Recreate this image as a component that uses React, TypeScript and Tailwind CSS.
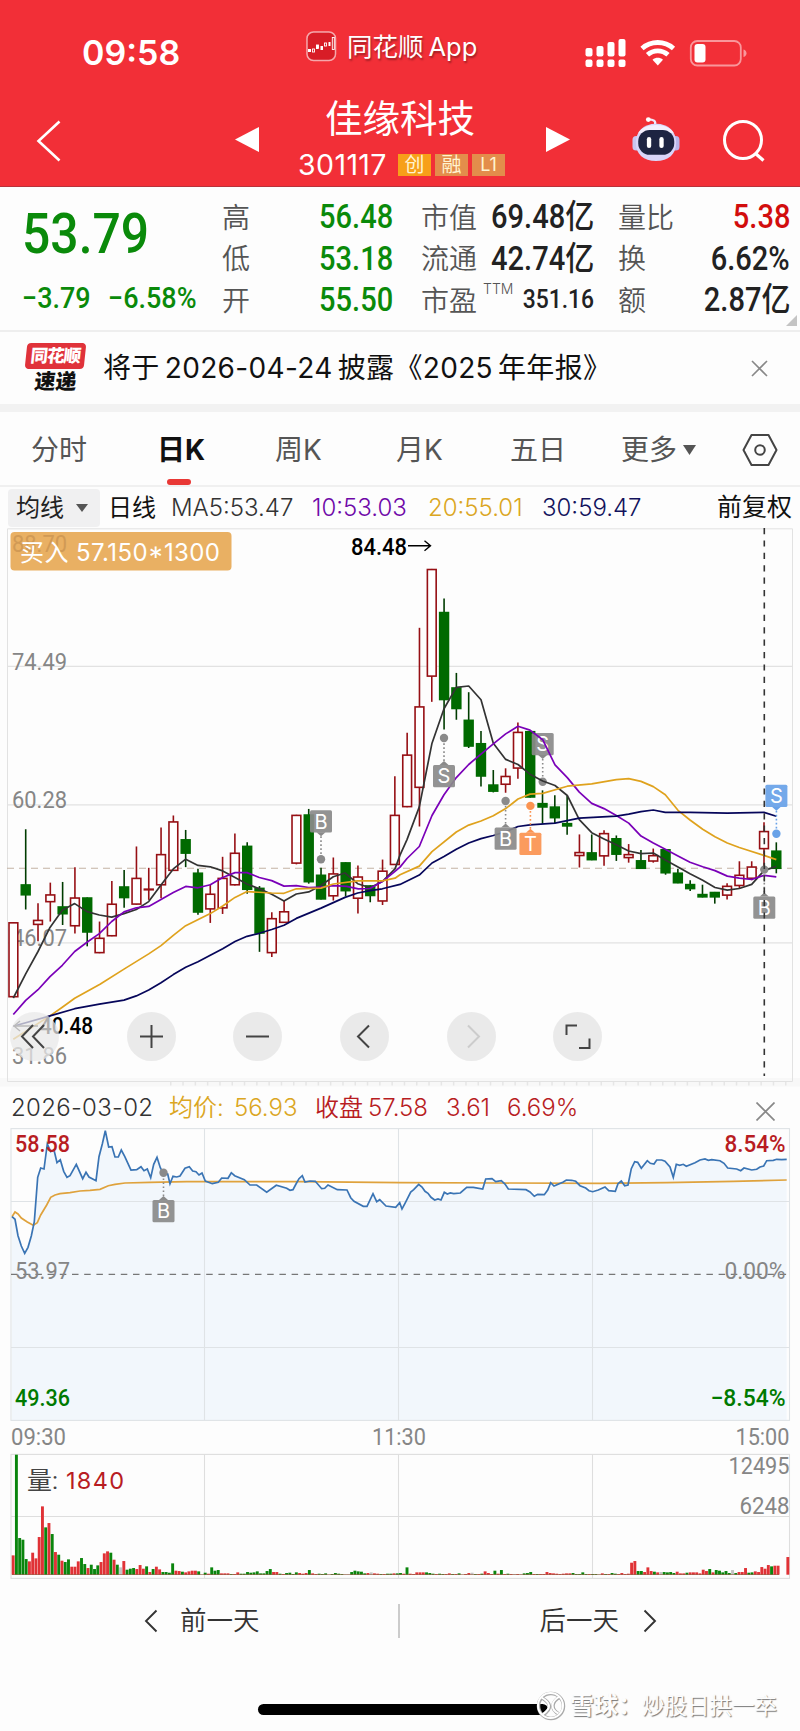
import type { ReactNode } from 'react';
import clsx from 'clsx';

const DIN = 'Roboto, "Noto Sans CJK SC", sans-serif';

// Chart points are stored in device units, these bring them to CSS pixels.
const CANDLE_TOP = 540;
const CANDLE_SCALE = 2.904;
const MINUTE_TOP = 1070;
const MINUTE_SCALE = 3;

const line = (pts: string, top: number, scale: number) =>
  pts
    .trim()
    .split(/\s+/)
    .map((p) => {
      const [x, y] = p.split(',').map(Number);
      return `${(x / 3).toFixed(1)},${(top + y / scale).toFixed(1)}`;
    })
    .join(' ');

// direction, high, body top, body bottom, low
type Candle = [string, number, number, number, number];

const CANDLES: Candle[] = [
  ['r', 1110, 1110, 1328, 1328],
  ['g', 840, 1000, 1032, 1073],
  ['r', 1055, 1103, 1118, 1165],
  ['r', 995, 1029, 1052, 1108],
  ['g', 993, 1064, 1087, 1118],
  ['r', 950, 1038, 1122, 1143],
  ['g', 1038, 1038, 1140, 1180],
  ['r', 1108, 1155, 1200, 1200],
  ['r', 990, 1056, 1151, 1151],
  ['g', 958, 1006, 1040, 1068],
  ['r', 890, 981, 1059, 1059],
  ['r', 952, 1014, 1016, 1045],
  ['r', 835, 912, 1003, 1040],
  ['r', 800, 817, 961, 961],
  ['g', 842, 869, 911, 950],
  ['g', 955, 966, 1082, 1088],
  ['r', 1000, 1027, 1073, 1112],
  ['r', 920, 981, 1070, 1086],
  ['r', 852, 908, 1003, 1003],
  ['g', 878, 888, 1016, 1027],
  ['g', 1005, 1010, 1143, 1196],
  ['r', 1081, 1098, 1200, 1211],
  ['r', 1048, 1078, 1112, 1112],
  ['r', 798, 798, 940, 942],
  ['g', 781, 797, 994, 998],
  ['g', 952, 972, 1044, 1044],
  ['r', 922, 968, 1035, 1047],
  ['g', 936, 936, 1020, 1035],
  ['r', 945, 977, 1042, 1085],
  ['g', 1003, 1003, 1034, 1052],
  ['r', 928, 960, 1050, 1060],
  ['r', 686, 798, 944, 944],
  ['r', 560, 623, 776, 776],
  ['r', 255, 483, 720, 832],
  ['r', 84, 84, 397, 470],
  ['g', 170, 209, 465, 550],
  ['g', 386, 428, 491, 522],
  ['g', 442, 522, 600, 604],
  ['g', 555, 590, 687, 716],
  ['g', 668, 710, 731, 733],
  ['r', 663, 685, 711, 734],
  ['r', 530, 557, 664, 693],
  ['g', 555, 555, 748, 748],
  ['g', 727, 764, 777, 824],
  ['g', 741, 774, 808, 822],
  ['g', 743, 822, 832, 856],
  ['r', 855, 906, 918, 951],
  ['g', 855, 907, 930, 930],
  ['r', 843, 851, 919, 946],
  ['g', 858, 866, 914, 932],
  ['r', 883, 912, 924, 937],
  ['g', 900, 930, 955, 955],
  ['r', 896, 915, 934, 937],
  ['g', 898, 898, 968, 972],
  ['g', 955, 966, 997, 997],
  ['g', 988, 999, 1014, 1019],
  ['g', 1001, 1028, 1038, 1038],
  ['g', 1022, 1022, 1038, 1056],
  ['r', 997, 1004, 1033, 1044],
  ['r', 933, 972, 1005, 1012],
  ['r', 933, 948, 984, 988],
  ['r', 820, 845, 898, 955],
  ['g', 878, 902, 955, 968],
];

const MA5 = `40,1330 77,1260 114,1195 150,1125 187,1075 224,1056 261,1079 298,1089 335,1095 372,1085 409,1073 446,1050 483,1002
  520,955 557,927 594,945 631,949 668,961 705,980 741,999 778,1013 815,1029 852,1048 889,1028 926,1022 963,1003 1000,978
  1035,967 1073,998 1110,1010 1147,992 1185,955 1200,915 1221,870 1258,775 1296,590 1332,490 1369,428 1406,424 1443,464
  1480,590 1517,637 1554,652 1590,680 1628,700 1665,713 1702,742 1738,812 1775,850 1812,868 1849,885 1886,903 1923,911
  1960,909 1996,929 2034,950 2070,969 2108,988 2145,1009 2182,1017 2218,1012 2255,1000 2292,960 2329,948`;

const MA10 = `40,1378 77,1337 114,1306 150,1268 187,1235 224,1195 261,1168 298,1143 335,1108 372,1080 409,1068 446,1064 483,1044
  520,1024 557,1006 594,1010 631,1001 668,980 705,966 741,966 778,980 815,989 852,1005 889,1004 926,1009 963,1008 1000,1004
  1040,1006 1075,1013 1110,1012 1147,992 1185,962 1200,950 1221,925 1258,890 1296,800 1332,740 1369,690 1406,652 1443,622
  1480,592 1517,563 1554,541 1590,552 1628,580 1665,653 1702,690 1738,732 1775,765 1812,780 1849,800 1886,822 1923,860
  1960,880 1996,898 2034,918 2070,936 2108,949 2145,960 2182,976 2218,982 2255,986 2292,974 2329,978`;

const MA20 = `40,1450 150,1382 187,1357 224,1331 300,1290 372,1246 446,1202 483,1178 520,1148 557,1120 631,1085 668,1063 705,1038
  741,1021 815,1025 852,1026 889,1013 963,1011 1000,999 1073,990 1147,990 1185,982 1200,972 1258,947 1296,905 1369,848
  1406,828 1443,816 1480,801 1517,780 1554,752 1590,738 1628,736 1702,715 1775,708 1849,696 1886,693 1923,701 1960,716
  1996,740 2034,785 2070,813 2108,840 2145,862 2182,880 2218,893 2292,916 2329,928`;

const MA30 = `40,1412 150,1382 224,1361 298,1348 372,1336 409,1324 446,1307 483,1286 520,1262 557,1241 594,1225 631,1206 668,1187
  705,1166 741,1151 778,1142 815,1131 852,1119 889,1099 963,1069 1035,1038 1073,1025 1110,1018 1147,1013 1200,1000 1258,973
  1296,938 1332,919 1369,898 1406,880 1443,867 1480,858 1517,847 1554,832 1590,827 1665,822 1738,808 1849,802 1886,796
  1923,789 1960,784 1996,791 2070,791 2182,793 2292,791 2329,802`;

const PRICE = `36,440 45,448 54,497 64,528 74,550 84,532 94,498 103,455 113,322 122,294 132,297 142,222 152,245 162,240 171,278
  181,269 191,304 201,322 210,317 229,283 248,326 258,307 267,321 288,332 297,260 307,222 316,182 326,231 336,230 345,261
  355,261 364,240 374,259 393,300 410,299 423,290 432,302 442,297 452,323 461,283 471,262 481,293 490,310 503,312 510,341
  519,319 530,321 540,318 555,295 568,290 578,303 588,305 597,315 606,309 616,333 637,341 655,337 665,324 684,325 694,308
  704,317 733,329 750,345 770,345 800,367 829,346 860,355 870,361 879,359 888,342 897,326 907,317 915,336 930,333 946,334
  965,356 974,355 984,345 1012,359 1041,360 1052,383 1062,394 1090,409 1101,409 1119,371 1130,395 1139,389 1158,408
  1187,412 1199,398 1206,417 1215,400 1232,366 1241,359 1256,343 1266,351 1275,364 1284,370 1293,382 1304,390 1314,387
  1323,390 1333,367 1342,372 1351,369 1361,371 1381,369 1400,352 1420,352 1448,357 1457,327 1476,326 1487,335 1504,332
  1515,342 1525,357 1578,359 1590,366 1603,379 1613,373 1633,374 1643,360 1652,338 1662,348 1690,336 1699,330 1715,331
  1727,334 1740,347 1757,354 1767,362 1778,365 1795,360 1815,351 1826,362 1846,364 1854,341 1864,333 1874,347 1884,345
  1894,296 1904,275 1913,277 1924,295 1942,272 1951,280 1962,282 1970,270 1985,270 1995,274 2010,291 2020,322 2029,283
  2039,286 2050,283 2059,289 2085,278 2100,270 2115,267 2125,271 2135,269 2160,272 2172,280 2183,294 2210,297 2222,302
  2232,294 2255,300 2270,298 2280,291 2291,288 2300,272 2320,271 2330,268 2345,269 2360,268`;

const AVERAGE = `36,440 45,426 54,432 64,444 82,456 100,466 112,458 122,435 140,405 152,382 165,375 180,371 210,368 240,363 270,361
  300,358 325,347 345,343 375,339 450,337 560,335 900,335 1200,338 1500,339 1800,340 2000,338 2200,334 2360,330`;

// one entry per minute: colour + bar height
const VOLUME = `r58 g360 g110 g105 g47 r40 r66 r49 r113 r205 g142 r155 g122 r68 g60 r42 g38 g46 r24 r24 r40 g50 g32 r20 g30 g17 g28
  r38 r64 r70 g66 r45 g30 n22 r41 g15 g18 g20 r17 r29 r18 g25 r8 g17 r24 r16 g8 g8 g6 g34 r12 r11 g9 r7 r10 r12 r12 g10 n0 g6
  r3 g22 g12 g14 r4 r4 r4 g2 r2 r7 g3 g3 g8 g6 g7 g10 g4 g4 g11 g17 r8 r8 g3 r2 g5 g6 g2 g7 r5 r3 r5 g14 r4 r2 g3 g2 g4 n0
  g2 g5 g3 g2 n1 n1 g8 g12 g10 g9 g4 r5 n7 r4 r3 g2 r2 g3 g3 r4 g4 g5 r3 g22 r3 r2 r7 r7 r7 g7 g5 g3 r2 g3 g2 r2 r4 g2 r2 g4
  n0 r2 r5 n6 g2 r2 g3 r10 r5 r2 g12 r3 g14 r2 g3 r2 n2 r2 n1 g4 g5 g8 r2 g2 r2 r2 r8 r5 r4 r3 r2 r3 r4 r4 g5 g2 g2 g7 g2 r2
  g2 g2 n1 r4 g2 r2 g5 g3 r2 r5 r2 r3 r36 r41 g11 g11 r8 r22 r11 g9 r7 n8 g8 g7 g8 g5 r9 r4 r4 g6 r7 r7 r7 r4 r15 r11 g17 r7
  g14 g12 g7 g11 g5 n14 g5 r8 r8 r20 g6 g7 r10 r8 r23 r18 r29 g25 r27 r27 n0 n0 r53`
  .trim()
  .split(/\s+/);

type LabelProps = {
  x: number;
  y: number;
  w: number;
  end?: boolean;
  size?: number;
  weight?: number;
  fill?: string;
  children: string;
};

function Label({
  x,
  y,
  w,
  end,
  size = 23.5,
  weight = 400,
  fill = '#868686',
  children,
}: LabelProps) {
  return (
    <text
      x={end ? x - w : x}
      y={y}
      textLength={w}
      lengthAdjust="spacingAndGlyphs"
      fontFamily={DIN}
      fontSize={size}
      fontWeight={weight}
      fill={fill}
    >
      {children}
    </text>
  );
}

type MarkerProps = {
  x: number;
  dot: number;
  badge: number;
  letter: string;
  color?: string;
};

// Trade marker: a lettered badge tied to its price by a dotted stem
function Marker({ x, dot, badge, letter, color = '#8a8a8a' }: MarkerProps) {
  const above = badge < dot;
  const edge = above ? badge + 22 : badge;
  const tip = above ? edge + 4 : edge - 4;
  return (
    <g fill={color}>
      <rect x={x - 11} y={badge} width="22" height="22.3" rx="1.5" opacity=".92" />
      <path d={`M${x - 4.5} ${edge}L${x} ${tip}L${x + 4.5} ${edge}z`} />
      <path
        d={`M${x} ${tip}V${dot}`}
        stroke={color}
        strokeWidth="1.6"
        strokeDasharray="1.6 2.4"
      />
      <circle cx={x} cy={dot} r="4.2" />
      <text
        x={x}
        y={badge + 18.3}
        fontSize="20"
        fill="#fff"
        textAnchor="middle"
        fontFamily="Inter, sans-serif"
      >
        {letter}
      </text>
    </g>
  );
}

function CandleChart() {
  const y = (v: number) => CANDLE_TOP + v / CANDLE_SCALE;
  return (
    <svg className="block h-[559px] w-full" viewBox="0 528 800 559">
      <rect x="0" y="1078" width="800" height="8.5" fill="#f8f8f8" />
      <path
        d="M170 1083.5H790"
        stroke="#e6e6e6"
        strokeWidth="4"
        strokeDasharray="1.5 10.8"
      />
      <g stroke="#e2e2e2" fill="none">
        <path d="M7.5 1081.5V528.8H792.5V1081.5z" />
        <path d="M7 666.4H793M7 804.8H793M7 942.9H793" strokeWidth="1.2" />
      </g>
      <Label x={12} y={670} w={55}>74.49</Label>
      <Label x={12} y={808.3} w={55}>60.28</Label>
      <Label x={12} y={946.2} w={55}>46.07</Label>
      <Label x={12} y={1064} w={55}>31.86</Label>
      <path
        d="M7 868.2H792"
        stroke="#c3b3a4"
        strokeWidth="1.1"
        strokeDasharray="7 5"
      />
      {CANDLES.map(([dir, high, top, bottom, low], i) => {
        const x = 13.4 + 12.305 * i;
        const up = dir === 'r';
        const flat = bottom - top < 4;
        return (
          <g key={i} stroke={up ? '#960f14' : '#003c00'} strokeWidth="1.6">
            <path d={`M${x} ${y(high)}V${y(low)}`} />
            <rect
              x={x - 4.4}
              y={y(top) + (flat ? 0 : 0.6)}
              width="8.8"
              height={flat ? 0.6 : Math.max(y(bottom) - y(top) - 1.2, 1)}
              fill={up ? '#fff' : '#006a00'}
              stroke={up ? '#960f14' : '#006a00'}
              strokeWidth="1.6"
            />
          </g>
        );
      })}
      <Marker x={321} dot={859.2} badge={810.3} letter="B" />
      <Marker x={542.7} dot={781.7} badge={732.9} letter="S" />
      <g fill="none" strokeWidth="1.7" strokeLinejoin="round">
        <polyline points={line(MA5, CANDLE_TOP, CANDLE_SCALE)} stroke="#333" />
        <polyline points={line(MA10, CANDLE_TOP, CANDLE_SCALE)} stroke="#7a00b8" />
        <polyline points={line(MA20, CANDLE_TOP, CANDLE_SCALE)} stroke="#dfa21d" />
        <polyline points={line(MA30, CANDLE_TOP, CANDLE_SCALE)} stroke="#06065a" />
      </g>
      <Marker x={444} dot={738} badge={764.9} letter="S" />
      <Marker x={505.6} dot={801} badge={827.5} letter="B" />
      <Marker x={530.4} dot={805.9} badge={832.7} letter="T" color="#fb9350" />
      <Marker x={764.3} dot={869.6} badge={896.4} letter="B" />
      <Marker x={776.4} dot={833.7} badge={784.8} letter="S" color="#68a2e8" />
      <path
        d="M764.3 528V1076"
        stroke="#333"
        strokeWidth="1.6"
        strokeDasharray="6.2 6.2"
      />
      <Label x={351} y={554.5} w={56} weight={500} fill="#000">84.48</Label>
      <path
        d="M408 545.7H430M424.5 540.7L430.5 545.7L424.5 550.7"
        stroke="#000"
        strokeWidth="1.4"
        fill="none"
      />
      <Label x={40} y={1034} w={53} weight={500} fill="#000">40.48</Label>
      <path
        d="M38 1026H14M20 1021L14 1026L20 1031"
        stroke="#333"
        strokeWidth="1.3"
        fill="none"
      />
      <rect x="10.5" y="532" width="221" height="38.5" rx="4" fill="#e9b063" />
      <Label x={12} y={552} w={55} fill="#d19a55">88.70</Label>
      <text
        x="20"
        y="560.5"
        fontSize="24"
        fill="#fff"
        textLength="200"
        fontFamily='Inter, "Noto Sans CJK SC", sans-serif'
      >
        买入 57.150*1300
      </text>
    </svg>
  );
}

function MinuteChart() {
  const price = line(PRICE, MINUTE_TOP, MINUTE_SCALE);
  return (
    <svg className="block h-[324px] w-full" viewBox="0 1128 800 324">
      <polygon points={`12,1420 ${price} 786.7,1420`} fill="#f2f7fc" />
      <g stroke="#dfe3e6" strokeWidth="1.1" fill="none">
        <rect x="11" y="1128.6" width="778.5" height="291.8" />
        <path d="M11 1201.5H789.5M11 1347.5H789.5M204.5 1128.5V1420.5M398.5 1128.5V1420.5M592.5 1128.5V1420.5" />
      </g>
      <path
        d="M11 1274.4H789.5"
        stroke="#777"
        strokeWidth="1.1"
        strokeDasharray="6.5 5.7"
      />
      <polyline
        points={line(AVERAGE, MINUTE_TOP, MINUTE_SCALE)}
        fill="none"
        stroke="#dfa23c"
        strokeWidth="1.7"
      />
      <polyline points={price} fill="none" stroke="#3a74b4" strokeWidth="1.7" />
      <Marker x={163.5} dot={1172.7} badge={1200} letter="B" />
      <Label x={15} y={1151.5} w={55} weight={500} fill="#b81c22">58.58</Label>
      <Label x={15} y={1278.7} w={55}>53.97</Label>
      <Label x={15} y={1405.5} w={55} weight={500} fill="#007a00">49.36</Label>
      <Label x={785.5} y={1151.5} w={61} end weight={500} fill="#b81c22">8.54%</Label>
      <Label x={785.5} y={1278.7} w={61} end>0.00%</Label>
      <Label x={785.5} y={1405.5} w={75} end weight={500} fill="#007a00">−8.54%</Label>
      <Label x={11} y={1444.5} w={55}>09:30</Label>
      <Label x={372} y={1444.5} w={54}>11:30</Label>
      <Label x={789.5} y={1444.5} w={54} end>15:00</Label>
    </svg>
  );
}

function VolumeChart() {
  // the last bar closes on the right edge of the grid
  const step = 774.7 / (VOLUME.length - 1);
  return (
    <svg className="block h-[128px] w-full" viewBox="0 1452 800 128">
      <g stroke="#dedede" strokeWidth="1.1" fill="none">
        <rect x="11" y="1454.4" width="778.5" height="124" />
        <path d="M11 1516.5H789.5M204.5 1454V1578M398.5 1454V1578M592.5 1454V1578" />
      </g>
      {VOLUME.map((bar, i) => {
        const h = Number(bar.slice(1)) / 3;
        const tone = { r: '#e03236', g: '#0a850d', n: '#c4c4c4' }[bar[0]];
        return (
          <rect
            key={i}
            x={11.7 + step * i}
            y={1574.7 - h}
            width="2.9"
            height={h}
            fill={tone}
          />
        );
      })}
      <path d="M12 1574.6H779" stroke="#7a3a18" strokeWidth=".8" opacity=".7" />
      <Label x={27} y={1488.5} w={31} size={24} fill="#444">量:</Label>
      <text
        x="66"
        y="1488.5"
        fontSize="23.5"
        fill="#b81c22"
        textLength="58"
        fontFamily="Inter, sans-serif"
      >
        1840
      </text>
      <Label x={789.5} y={1474.3} w={61} end>12495</Label>
      <Label x={789.5} y={1514.3} w={50} end>6248</Label>
    </svg>
  );
}

function StatusBar() {
  return (
    <div className="flex h-[92px] items-start">
      <div className="ml-[82px] mt-[32px] w-[224px] text-[34px] font-semibold leading-[42px]">
        09:58
      </div>
      <svg className="mt-[31px] size-[31px]" viewBox="0 0 31 31">
        <rect
          x="1"
          y="1"
          width="28.5"
          height="28.5"
          rx="6.5"
          fill="#d81d27"
          stroke="#fff"
          strokeOpacity=".6"
          strokeWidth="1.5"
        />
        <g fill="#fff">
          <rect x="2" y="18" width="3" height="3" />
          <rect x="10" y="14" width="2.6" height="4" />
          <rect x="14.5" y="15" width="2.5" height="4" />
          <rect x="22.5" y="11" width="2" height="4" />
        </g>
        <g fill="none" stroke="#fff" strokeWidth=".9">
          <rect x="6.5" y="18" width="2" height="3" />
          <rect x="10.5" y="14" width="2" height="3" />
          <rect x="18.5" y="12" width="2" height="3" />
          <rect x="26.3" y="6.5" width="2" height="12" />
        </g>
      </svg>
      <div className="ml-[10px] mt-[29px] w-[238px] whitespace-nowrap text-[25.5px] leading-[36px] [text-shadow:1px_2px_2px_rgba(0,0,0,.35)]">
        同花顺<span className="ml-[5px]">App</span>
      </div>
      <svg className="mt-[38px] h-[30px] w-[164px]" viewBox="0 0 164 30">
        <g fill="#fff">
          <rect x="0.5" y="10" width="7" height="8.5" rx="2" />
          <rect x="11.5" y="8" width="7" height="10.5" rx="2" />
          <rect x="22.5" y="4" width="7" height="14.5" rx="2" />
          <rect x="33.5" y="1" width="7" height="17.5" rx="2" />
          <rect x="0.5" y="21.5" width="7" height="7.5" rx="2" />
          <rect x="11.5" y="21.5" width="7" height="7.5" rx="2" />
          <rect x="22.5" y="21.5" width="7" height="7.5" rx="2" />
          <rect x="33.5" y="21.5" width="7" height="7.5" rx="2" />
        </g>
        <g fill="none" stroke="#fff" strokeWidth="4.8">
          <path d="M57 10.5C66 2.5 79.5 2.5 88.5 10.5" />
          <path d="M62.5 16.8C68.5 11.5 77 11.5 83 16.8" />
        </g>
        <path d="M67.5 21.8C70.8 19.2 74.7 19.2 78 21.8L72.8 27.5z" fill="#fff" />
        <rect
          x="105.8"
          y="3"
          width="50"
          height="24.5"
          rx="6.5"
          fill="none"
          stroke="#fff"
          strokeOpacity=".5"
          strokeWidth="1.8"
        />
        <rect x="109.5" y="6" width="11" height="18.5" rx="3" fill="#fff" />
        <path d="M158.5 11.5Q161.5 12.5 161.5 15.3T158.5 19z" fill="#fff" opacity=".5" />
      </svg>
    </div>
  );
}

function Robot() {
  return (
    <svg className="ml-[61px] mt-[23px] h-[48px] w-[48px]" viewBox="0 0 50 48">
      <path d="M24 9C25 5.5 22.5 3.5 17 3.5" fill="none" stroke="#efe9fb" strokeWidth="2.4" />
      <circle cx="17" cy="3.8" r="2.5" fill="#fff" />
      <rect x="0.5" y="21" width="8" height="15" rx="4" fill="#c9c5f0" />
      <rect x="41.5" y="21" width="8" height="15" rx="4" fill="#b9b5ea" />
      <path d="M25 8C38 8 46 16 46 28S38 47 25 47S4 40 4 28S12 8 25 8z" fill="#d9d5f9" />
      <path d="M25 9.5C34 9.5 41 13 43.5 18H6.5C9 13 16 9.5 25 9.5z" fill="#f3effd" />
      <rect x="6.5" y="14.5" width="37.5" height="26" rx="12" fill="#1d2442" />
      <rect x="15.5" y="22" width="4.5" height="11.5" rx="2.2" fill="#fff" />
      <rect x="28.5" y="22" width="4.5" height="11.5" rx="2.2" fill="#fff" />
    </svg>
  );
}

function TitleBar() {
  return (
    <div className="flex h-[94px] items-start">
      <svg className="ml-[36px] mt-[28px] h-[42px] w-[26px]" viewBox="0 0 26 42">
        <path
          d="M23.5 1.5L2.5 21L23.5 40.5"
          fill="none"
          stroke="#fff"
          strokeWidth="2.6"
        />
      </svg>
      <svg className="ml-[173px] mt-[34px] h-[27px] w-[25px]" viewBox="0 0 25 27">
        <path d="M0 13.5L24 1V26z" fill="#fff" />
      </svg>
      <div className="ml-[38px] w-[208px]">
        <div className="ml-[27px] whitespace-nowrap pt-[1px] text-[37.5px] leading-[52px]">
          佳缘科技
        </div>
        <div className="flex h-[40px] items-center gap-[4px] text-[20px] leading-[22px] text-[#fff3d0]">
          <span className="mr-[7px] w-[89px] whitespace-nowrap text-[28.5px] leading-[40px] tracking-[0.4px] text-white">
            301117
          </span>
          <span className="h-[22px] w-[33px] bg-[#f7a019] text-center">创</span>
          <span className="h-[22px] w-[33px] bg-[#e38d4b] text-center">融</span>
          <span className="h-[22px] w-[33px] bg-[#e38d4b] text-center text-[18px]">
            L1
          </span>
        </div>
      </div>
      <svg className="ml-[40px] mt-[34px] h-[27px] w-[25px]" viewBox="0 0 25 27">
        <path d="M24 13.5L0 1V26z" fill="#fff" />
      </svg>
      <Robot />
      <svg className="ml-[42px] mt-[26px] h-[44px] w-[44px]" viewBox="0 0 44 44">
        <circle cx="21" cy="22" r="18.5" fill="none" stroke="#fff" strokeWidth="3" />
        <path d="M33.5 35.5L41.5 42.5" stroke="#fff" strokeWidth="3.2" />
      </svg>
    </div>
  );
}

const QUOTE_COLUMNS = [
  {
    className: 'ml-[22px] w-[171px]',
    valueClass: 'text-[#0a8a0a]',
    rows: [
      ['高', '56.48'],
      ['低', '53.18'],
      ['开', '55.50'],
    ],
  },
  {
    className: 'ml-[28px] w-[170px]',
    valueClass: 'text-[#222]',
    rows: [
      ['市值', '69.48亿'],
      ['流通', '42.74亿'],
      ['市盈', '351.16'],
    ],
  },
  {
    className: 'ml-[27px] w-[172px]',
    valueClass: 'text-[#222]',
    rows: [
      ['量比', '5.38'],
      ['换', '6.62%'],
      ['额', '2.87亿'],
    ],
  },
];

function Din({ className, children }: { className?: string; children: ReactNode }) {
  return (
    <span
      className={clsx(
        'inline-block whitespace-nowrap font-[Roboto,"Noto_Sans_CJK_SC",sans-serif] font-medium',
        className
      )}
    >
      {children}
    </span>
  );
}

function Quote() {
  return (
    <section className="relative flex h-[145px] border-b-2 border-[#eee] pt-[9px]">
      <div className="ml-[22px] w-[178px] text-[#0a8a0a]">
        <Din className="mt-[4px] origin-left scale-x-[0.89] text-[56px] leading-[68px]">
          53.79
        </Din>
        <div className="mt-[12px] flex leading-[36px]">
          <Din className="w-[86px] origin-left scale-x-[0.93] text-[29px]">−3.79</Din>
          <Din className="w-[91px] origin-left scale-x-[0.93] text-[29px]">−6.58%</Din>
        </div>
      </div>
      {QUOTE_COLUMNS.map((column) => (
        <div key={column.className} className={column.className}>
          {column.rows.map(([name, value]) => (
            <div key={name} className="flex h-[41.5px] items-center justify-between">
              <span className="flex whitespace-nowrap pt-[2px] text-[28px] leading-[42px] font-[350] text-[#555]">
                {name}
                {name === '市盈' && (
                  <span className="ml-[6px] mt-[1px] text-[14px] leading-[16px]">
                    TTM
                  </span>
                )}
              </span>
              <Din
                className={clsx(
                  'origin-right scale-x-[0.88]',
                  name === '市盈' ? 'text-[26px]' : 'text-[33px]',
                  name === '量比' ? 'text-[#d20d0d]' : column.valueClass
                )}
              >
                {value}
              </Din>
            </div>
          ))}
        </div>
      ))}
      <svg className="absolute bottom-[4px] right-[3px] size-[11px]" viewBox="0 0 11 11">
        <path d="M11 0V11H0z" fill="#c4c4c4" />
      </svg>
    </section>
  );
}

function Notice() {
  return (
    <section className="flex h-[72px] items-center">
      <div className="ml-[26px] w-[59px] text-center font-black">
        <div className="-skew-x-6 rounded-[4px] bg-[#e0323a] text-[17.5px] leading-[26px] tracking-[-1px] text-white">
          同花顺
        </div>
        <div className="-skew-x-6 text-[21px] leading-[25px] text-[#111]">速递</div>
      </div>
      <p className="ml-[18px] w-[648px] whitespace-nowrap text-[28px] tracking-[0.35px] text-[#111]">
        将于<span className="mx-[5px]">2026-04-24</span>披露《
        <span className="mr-[5px]">2025</span>年年报》
      </p>
      <svg className="size-[17px]" viewBox="0 0 17 17">
        <path d="M1 1L16 16M16 1L1 16" stroke="#888" strokeWidth="1.6" />
      </svg>
    </section>
  );
}

const TABS = [
  { name: '分时', className: 'ml-[31px] w-[126px]' },
  { name: '日K', className: 'w-[118px] font-bold text-[#111]' },
  { name: '周K', className: 'w-[121px]' },
  { name: '月K', className: 'w-[114px]' },
  { name: '五日', className: 'w-[111px]' },
  { name: '更多', className: 'w-[62px]' },
];

function Tabs() {
  return (
    <nav className="flex h-[75px] items-center border-b-2 border-[#f0f0f0] pt-[2px] text-[28px] text-[#555]">
      {TABS.map(({ name, className }) => (
        <div key={name} className={clsx('relative whitespace-nowrap', className)}>
          {name}
          {name === '日K' && (
            <i className="absolute left-[10px] top-[50px] h-[6px] w-[24px] rounded-[3px] bg-[#e93835]" />
          )}
        </div>
      ))}
      <svg className="h-[10px] w-[13px]" viewBox="0 0 13 10">
        <path d="M0 0H13L6.5 10z" fill="#555" />
      </svg>
      <svg className="ml-[46px] h-[34px] w-[36px]" viewBox="0 0 36 34">
        <path
          d="M9.5 2H26.5L34.5 17L26.5 32H9.5L1.5 17z"
          fill="none"
          stroke="#444"
          strokeWidth="2"
          strokeLinejoin="round"
        />
        <circle cx="18" cy="17" r="4.8" fill="none" stroke="#444" strokeWidth="2" />
      </svg>
    </nav>
  );
}

function Averages() {
  return (
    <div className="flex h-[41px] items-center whitespace-nowrap text-[24px]">
      <div className="ml-[8px] flex h-[38px] w-[92px] items-center rounded-[4px] bg-[#f0f0f1] pl-[8px] text-[#222]">
        均线
        <svg className="ml-[12px] h-[8px] w-[12px]" viewBox="0 0 12 8">
          <path d="M0 0H12L6 8z" fill="#555" />
        </svg>
      </div>
      <span className="ml-[8px] w-[63px] text-[#111]">日线</span>
      <span className="w-[141px] font-[350] text-[#333]">MA5:53.47</span>
      <span className="w-[116px] font-[350] text-[#6f08a8]">10:53.03</span>
      <span className="w-[114px] font-[350] text-[#dba622]">20:55.01</span>
      <span className="w-[175px] font-[350] text-[#12125c]">30:59.47</span>
      <span className="text-[25px] text-[#111]">前复权</span>
    </div>
  );
}

const TOOLS = [
  'M23 13L12 24.5L23 36M34 13L23 24.5L34 36',
  'M13 24.5H36M24.5 13V36',
  'M13 24.5H36',
  'M29 13.5L18 24.5L29 35.5',
  'M21 13.5L32 24.5L21 35.5',
  'M13.5 23V13.5H24M26 36H36.5V26.5',
];

function Tools() {
  return (
    <div className="absolute left-[10px] top-[484px] flex gap-[57.7px]">
      {TOOLS.map((d, i) => (
        <svg
          key={d}
          className={clsx('size-[49px]', i === 0 && 'mr-[10px]')}
          viewBox="0 0 49 49"
        >
          <circle
            cx="24.5"
            cy="24.5"
            r="24.5"
            fill="#e8e8e8"
            opacity={i === 0 ? 0.75 : 0.92}
          />
          <path d={d} fill="none" stroke={i === 4 ? '#ccc' : '#444'} strokeWidth="2" />
        </svg>
      ))}
    </div>
  );
}

function DaySummary() {
  return (
    <div className="flex h-[41px] items-center whitespace-nowrap text-[24px] font-[350] text-[#b81c22]">
      <span className="ml-[11px] w-[158px] tracking-[0.3px] text-[#333]">2026-03-02</span>
      <span className="w-[65px] text-[#dba622]">均价:</span>
      <span className="w-[81px] text-[#dba622]">56.93</span>
      <span className="w-[53px]">收盘</span>
      <span className="w-[78px]">57.58</span>
      <span className="w-[61px]">3.61</span>
      <span className="w-[249px]">6.69%</span>
      <svg className="mt-[8px] size-[19px]" viewBox="0 0 19 19">
        <path d="M.5 .5L18.5 18.5M18.5 .5L.5 18.5" stroke="#888" strokeWidth="1.7" />
      </svg>
    </div>
  );
}

function DayNav() {
  return (
    <div className="mt-[20px] flex h-[42px] items-center whitespace-nowrap text-[26.5px] font-[350] text-[#333]">
      <svg className="ml-[144px] h-[24px] w-[14px]" viewBox="0 0 14 24">
        <path
          d="M12.5 1.5L2 12L12.5 22.5"
          fill="none"
          stroke="#333"
          strokeWidth="1.9"
        />
      </svg>
      <span className="ml-[22px] w-[218px]">前一天</span>
      <i className="h-[34px] w-[1.5px] bg-[#ccc]" />
      <span className="ml-[140px] w-[103px]">后一天</span>
      <svg className="h-[24px] w-[14px]" viewBox="0 0 14 24">
        <path
          d="M1.5 1.5L12 12L1.5 22.5"
          fill="none"
          stroke="#333"
          strokeWidth="1.9"
        />
      </svg>
    </div>
  );
}

function Watermark() {
  return (
    <div className="absolute bottom-[8px] left-[536px] flex h-[34px] items-center whitespace-nowrap text-[22.5px] text-[#fdfdfd] [text-shadow:1px_1px_1px_#777]">
      <svg className="h-[30px] w-[30px]" viewBox="0 0 30 30">
        <g fill="none" stroke="#aaa" strokeWidth="3.5">
          <circle cx="15" cy="15" r="12.5" />
          <path d="M6 7Q13 11 13.5 15T7 24M24 6Q17 10 17 15T23 23" />
        </g>
        <g fill="none" stroke="#fff" strokeWidth="2">
          <circle cx="14.5" cy="14.5" r="12.5" />
          <path d="M5.5 6.5Q12.5 10.5 13 14.5T6.500 23.5M23.5 5.5Q16.5 9.5 16.5 14.5T22.5 22.5" />
        </g>
      </svg>
      <span className="ml-[4px] w-[72px] text-[24px] font-bold">雪球：</span>
      <span>炒股日拱一卒</span>
    </div>
  );
}

export default function App() {
  return (
    <main className="relative h-[1731px] w-[800px] overflow-hidden bg-[#fdfdfd] font-[Inter,'Noto_Sans_CJK_SC',sans-serif]">
      <header className="h-[187px] border-b border-[#b8323a] bg-[#f22f37] text-white">
        <StatusBar />
        <TitleBar />
      </header>
      <Quote />
      <Notice />
      <div className="h-[8px] bg-[#f2f2f2]" />
      <Tabs />
      <Averages />
      <div className="relative">
        <CandleChart />
        <Tools />
      </div>
      <DaySummary />
      <MinuteChart />
      <VolumeChart />
      <DayNav />
      <div className="ml-[258px] mt-[62px] h-[11px] w-[290px] rounded-full bg-black" />
      <Watermark />
    </main>
  );
}
